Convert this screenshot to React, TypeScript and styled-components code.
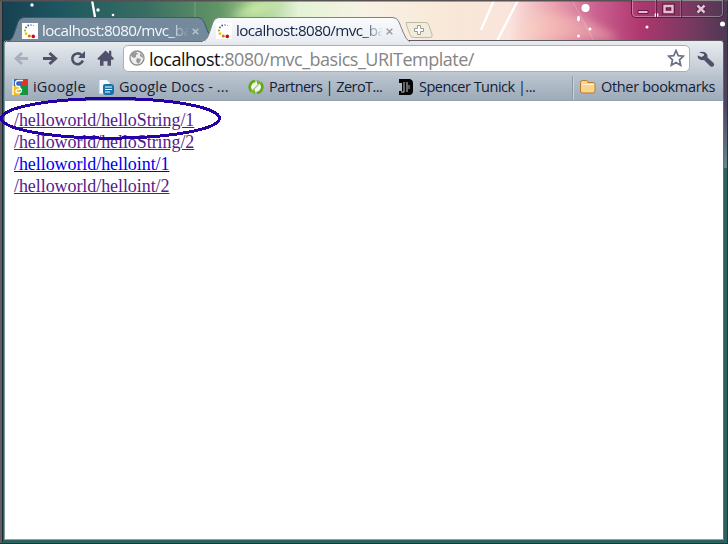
import React from "react";
import styled, { createGlobalStyle } from "styled-components";

const Global = createGlobalStyle`
  *{box-sizing:border-box}
  body{margin:0;background:#fff;overflow:hidden}
`;
const Window = styled.div`
  position:relative;width:728px;height:544px;padding:0 4px 4px 5px;
  display:flex;flex-direction:column;
  background:#2b625f;font-family:"Open Sans","Noto Sans",sans-serif;
`;
const Backdrop = styled.svg`position:absolute;left:0;top:0;`;
const TitleBar = styled.header`
  position:relative;height:41px;flex:none;display:flex;align-items:flex-end;
`;
const Tab = styled.div<{ $active?: boolean }>`
  position:relative;width:208px;height:24px;flex:none;display:flex;align-items:center;
  margin-left:${p => (p.$active ? "-13px" : "2px")};
  padding-left:${p => (p.$active ? "14px" : "15px")};
  z-index:${p => (p.$active ? 2 : 1)};
`;
const TabShape = styled.svg`position:absolute;left:0;top:0;`;
const TabIcon = styled.svg`position:relative;flex:none;margin-top:3px;`;
const TabTitle = styled.span<{ $active?: boolean }>`
  position:relative;width:160px;margin:1px -14px 0 4px;white-space:nowrap;
  font-size:15.2px;line-height:22px;letter-spacing:-.57px;
  color:${p => (p.$active ? "#142446" : "#f4f7fa")};
  mask-image:linear-gradient(90deg,#000 126px,transparent 147px);
`;
const Close = styled.svg`position:relative;flex:none;margin:5px 0 0 4px;`;
const NewTab = styled.svg`margin:0 0 2px -5px;flex:none;position:relative;z-index:1;`;
const Controls = styled.div`
  position:absolute;left:626px;top:0;width:93px;height:18px;display:flex;
  border:1px solid #67173f;border-top:0;border-radius:0 0 5px 5px;
  box-shadow:inset 0 0 0 1px #ffffff55;
`;
const Control = styled.button<{ $w: number }>`
  width:${p => p.$w}px;height:17px;padding:0 2px 2px 0;border:0;background:none;
  border-right:1px solid #681c48;box-shadow:inset -1px 0 #ffffff30;
  display:flex;align-items:center;justify-content:center;
  &:last-child{border-right:0;box-shadow:none;padding-right:4px}
`;
const Toolbar = styled.nav`
  position:relative;height:34px;flex:none;display:flex;align-items:center;
  background:linear-gradient(#e8ecf1,#bdc6d0);border-right:1px solid #59647a;border-radius:3px 3px 0 0;
`;
const NavIcons = styled.svg`flex:none;`;
const Address = styled.div`
  width:567px;height:27px;margin:0;padding-left:5px;display:flex;align-items:center;
  border:1px solid #a9afb9;border-radius:5px;background:#fff;flex:none;
`;
const Url = styled.span`
  flex:1;margin:1px 0 0 4px;font-size:18px;line-height:26px;letter-spacing:-.5px;color:#858585;white-space:nowrap;
  b{font-weight:400;color:#101010}
`;
const Bookmarks = styled.nav`
  position:relative;height:26px;flex:none;display:flex;align-items:center;
  background:linear-gradient(#b9c4cf,#9eabb8);border-bottom:1px solid #98a2ad;padding-left:7px;
  border-right:1px solid #59647a;
`;
const Bookmark = styled.span<{ $w: number }>`
  width:${p => p.$w}px;display:flex;align-items:center;gap:5px;flex:none;margin-top:-2px;
  svg{flex:none}
`;
const Label = styled.span<{ $ls: number }>`
  font-size:14.5px;line-height:20px;letter-spacing:${p => p.$ls}px;white-space:nowrap;color:#142038;
`;
const Divider = styled.i`width:2px;height:24px;border-left:1px solid #8d99a7;border-right:1px solid #c8d2dc;flex:none;`;
const Page = styled.main`
  position:relative;flex:1;background:#fff;padding:8px 9px;display:flex;flex-direction:column;align-items:flex-start;
  border-right:1px solid #59737e;border-bottom:1px solid #8ba6a8;
`;
const Link = styled.a<{ $fresh?: boolean }>`
  font:18px/22px "Liberation Serif",serif;letter-spacing:-.07px;color:${p => (p.$fresh ? "#0000ee" : "#551a8b")};
  text-decoration:underline;
`;
const Ring = styled.svg`position:absolute;left:0;top:92px;pointer-events:none;z-index:5;`;

const Dots = () => (
  <TabIcon width="16" height="16" viewBox="0 0 16 16">
    <path d="M0 0h16v16H0z" fill="#fff" />
    <circle cx="11.3" cy="13.4" r="1.8" fill="#c80d18" />
    <circle cx="7.3" cy="13" r="1.5" fill="#e66c10" />
    <circle cx="4" cy="10.7" r="1.4" fill="#f6c500" />
    <circle cx="3" cy="7.4" r="1" fill="#98a11c" />
    <circle cx="4" cy="4.4" r=".9" fill="#247649" />
    <circle cx="6.2" cy="2.5" r=".9" fill="#2a5da0" />
    <circle cx="9" cy="2" r=".7" fill="#504492" />
    <circle cx="11.5" cy="2.5" r=".5" fill="#a75291" />
  </TabIcon>
);
const BrowserTab = ({ active }: { active?: boolean }) => (
  <Tab $active={active}>
    <TabShape width="208" height="25">
      <defs>
        <linearGradient id="activeTab" x2="0" y2="1"><stop stopColor="#fafbfd" /><stop offset="1" stopColor="#e8ecf1" /></linearGradient>
      </defs>
      <path
        d="M0 25C5 23 6 20 8 14L11 5Q13 .5 17 .5H191Q195 .5 197 5L201 15Q204 23 208 25Z"
        fill={active ? "url(#activeTab)" : "#74899c"} stroke={active ? "#7b8285" : "#3e5968"} strokeWidth="1"
      />
      {active && <path d="M1 25H207" stroke="#e8ecf1" strokeWidth="2" />}
    </TabShape>
    <Dots />
    <TabTitle $active={active}>localhost:8080/mvc_ba</TabTitle>
    <Close width="7" height="7"><path d="M.7.7l5.6 5.6M6.3.7L.7 6.3" stroke={active ? "#9a9fa8" : "#b6c3cf"} strokeWidth="1.5" /></Close>
  </Tab>
);

export default function App() {
  return (
    <>
      <Global />
      <Window>
        <Backdrop width="728" height="544">
          <defs>
            <linearGradient id="sky">
              <stop stopColor="#173f50" /><stop offset=".08" stopColor="#1d5660" /><stop offset=".2" stopColor="#386e62" />
              <stop offset=".3" stopColor="#629466" /><stop offset=".35" stopColor="#9ac587" /><stop offset=".41" stopColor="#e3f3d6" />
              <stop offset=".5" stopColor="#f8f2e4" /><stop offset=".62" stopColor="#f8e8d8" /><stop offset=".7" stopColor="#fae4dc" />
              <stop offset=".76" stopColor="#eba3b0" /><stop offset=".82" stopColor="#cb6090" /><stop offset=".88" stopColor="#ae376f" />
              <stop offset=".95" stopColor="#783960" /><stop offset="1" stopColor="#4b3853" />
            </linearGradient>
            <linearGradient id="side" x2="0" y2="1"><stop stopColor="#4b3853" /><stop offset=".5" stopColor="#50435e" /><stop offset="1" stopColor="#66868c" /></linearGradient>
            <filter id="soft" x="-30%" y="-80%" width="160%" height="260%"><feGaussianBlur stdDeviation="5" /></filter>
            <filter id="glow"><feGaussianBlur stdDeviation=".7" /></filter>
          </defs>
          <path d="M0 0h728v42H0z" fill="url(#sky)" />
          <path d="M255 0h30l-25 18h-30z" fill="#c4e5a4" filter="url(#soft)" />
          <path d="M530 15q50-8 90 25h-105z" fill="#ffd5be" opacity=".4" filter="url(#soft)" />
          <path d="M92 0l3 17M494 0l-13 30M518 0l-21 41" stroke="#fff" strokeWidth="2.3" filter="url(#glow)" />
          <path d="M572 0l22 41M195 0v17" stroke="#fff" opacity=".2" />
          <g fill="#fff" filter="url(#glow)">
            <circle cx="585.5" cy="8" r="4" /><ellipse cx="578.5" cy="18.5" rx="1.5" ry="2.8" /><circle cx="590" cy="29" r="1.5" />
            <circle cx="578.5" cy="36" r="1.5" /><circle cx="647" cy="27" r="1.5" /><circle cx="656.5" cy="15" r="2" /><circle cx="722.5" cy="24" r="2.5" />
            <circle cx="32" cy="5" r="1.7" /><circle cx="98" cy="10" r="1.7" /><circle cx="113" cy="15" r="1.3" />
          </g>
          <path d="M723 41h5v127h-5z" fill="url(#side)" />
          <path d="M0 0h2v544H0z" fill="#665d64" /><path d="M2 2h1v540H2z" fill="#142e34" /><path d="M4 41h1v499H4z" fill="#799ba0" />
          <path d="M0 .5h728" stroke="#555052" strokeWidth="2" /><path d="M727.5 1v542" stroke="#27373d" />
          <path d="M0 543.5h728" stroke="#1b373b" />
          <path d="M5 40.5h718" stroke="#5f5b60" />
        </Backdrop>
        <TitleBar>
          <BrowserTab /><BrowserTab active />
          <NewTab width="29" height="18"><path d="M1 1.5h20q2 0 3 3l3 9q1 3-2 3H9q-3 0-4-3L1.5 4q-1-2.5 1-2.5z" fill="#f1eddc" stroke="#bdb9a5" /><path d="M12.5 4.5h3v3h3v3h-3v3h-3v-3h-3v-3h3z" fill="#fff" stroke="#9b9990" /></NewTab>
          <Controls>
            <Control $w={25} aria-label="Minimize"><svg width="13" height="16"><path d="M1 10.5h10v3H1z" fill="#e6bdd0" stroke="#671b41" /></svg></Control>
            <Control $w={25} aria-label="Maximize"><svg width="13" height="16"><path d="M2.5 6h8v6h-8z" fill="none" stroke="#671b41" strokeWidth="5" /><path d="M2.5 6h8v6h-8z" fill="none" stroke="#e6bdd0" strokeWidth="2.4" /></svg></Control>
            <Control $w={41} aria-label="Close"><svg width="14" height="16"><path d="M3.5 5.5l7 7M10.5 5.5l-7 7" stroke="#4b2844" strokeWidth="5" /><path d="M3.5 5.5l7 7M10.5 5.5l-7 7" stroke="#dfbfd1" strokeWidth="2.5" /></svg></Control>
          </Controls>
        </TitleBar>
        <Toolbar>
          <NavIcons width="118" height="34" viewBox="5 41 118 34">
            <path d="M28 58.5H17M22 53l-6 5.5 6 5.500" fill="none" stroke="#a9afbc" strokeWidth="2.8" />
            <path d="M43 58.5h12M49.5 53l6 5.5-6 5.5" fill="none" stroke="#4f5069" strokeWidth="3" />
            <path d="M81.5 55a5.4 5.4 0 1 0 1.3 5.5" fill="none" stroke="#4f5069" strokeWidth="2.6" /><path d="M85 51v7h-7z" fill="#4f5069" />
            <path d="M97.5 58.5l8-8 3.5 3.2v-3h2.3v5l2.7 2.8-1 1.2H111v6h-3.5v-4.5h-4v4.5H100v-6h-2z" fill="#4f5069" />
          </NavIcons>
          <Address>
            <svg width="16" height="16" viewBox="0 0 16 16"><circle cx="8" cy="8" r="7" fill="#eee" stroke="#929292" strokeWidth="1.4" /><path d="M3 3l4-1 2 2-2 1v2l-2 1-2-1-1-2zM8 8l4 1-1 3-2 2-2-3zM11 3l3 3v2l-3-2z" fill="#999" /></svg>
            <Url><b>localhost</b>:8080/mvc_basics_URITemplate/</Url>
            <svg width="18" height="18" viewBox="0 0 18 18"><path d="M9 1.5l2.2 5.1 5.3.5-4 3.7 1.2 5.4L9 13.4l-4.7 2.8 1.2-5.4-4-3.7 5.3-.5z" fill="#fff" stroke="#69728a" strokeWidth="1.7" /></svg>
            <svg width="4" height="4" />
          </Address>
          <NavIcons width="28" height="34" viewBox="690 41 28 34"><path d="M699 52.5q4-1.500 7 .5 2 1.500 1.500 4.500l6 5.500q1.500 2-.5 3.500-2 1-3.500-1l-5.500-5.500q-6 1-6.500-4.500l4 1.500 2.500-1.500v-1.500z" fill="#4f5069" /></NavIcons>
        </Toolbar>
        <Bookmarks>
          <Bookmark $w={86}>
            <svg width="16" height="16" viewBox="0 0 16 16"><path d="M0 0h9v7H0z" fill="#3366c4" /><path d="M9 0h7v7H9z" fill="#dc3426" /><path d="M8 7h8v9H8z" fill="#169342" /><path d="M0 7h8v9H0z" fill="#f1bd20" /><path d="M0 0h2v16H0z" fill="#fff" opacity=".7" /><path d="M11 1.500H6.500C2.500 1.500 2.500 7.500 6.500 7.500h1c0 2 2.500 2 2 4.500-1 3-6.500 2-5.500 0 0-2 3-2 5-2" fill="none" stroke="#fff" strokeWidth="1.3" /></svg>
            <Label $ls={0.2}>iGoogle</Label>
          </Bookmark>
          <Bookmark $w={150}>
            <svg width="16" height="16" viewBox="0 0 16 16"><path d="M1 .5h8l3 3V15H1z" fill="#f7fafc" stroke="#a8c2d6" /><path d="M7 5h6q3 0 3 3v5q0 3-3 3H8q-3 0-3-3V7q0-2 2-2z" fill="#1972a8" /><path d="M7 8h7M7 10.5h7M7 13h5" stroke="#fff" strokeWidth="1.2" /></svg>
            <Label $ls={0.08}>Google Docs - ...</Label>
          </Bookmark>
          <Bookmark $w={150}>
            <svg width="16" height="16" viewBox="0 0 16 16"><circle cx="8" cy="8" r="5" fill="#f2f9e9" /><path d="M7 2A6.2 6.2 0 0 0 3.5 12.5M9 14A6.2 6.2 0 0 0 12.5 3.5" fill="none" stroke="#64a817" strokeWidth="2.6" /><path d="M1 11.5l6-1v5zM15 4.5l-6 1v-5z" fill="#78b82b" /><path d="M5 11l6-6" stroke="#a9bc99" strokeWidth="1.2" /></svg>
            <Label $ls={-0.55}>Partners | ZeroT...</Label>
          </Bookmark>
          <Bookmark $w={174}>
            <svg width="16" height="16" viewBox="0 0 16 16"><path d="M1 0h11q3 1 3 4v8q0 3-3 4H1v-4h3V4H1z" fill="#050505" /><path d="M6 3v10H3M9 3v10" fill="none" stroke="#c5ccd4" /><path d="M10 7h2M10 9h2" stroke="#aaa" /></svg>
            <Label $ls={-0.5}>Spencer Tunick |...</Label>
          </Bookmark>
          <Divider />
          <Bookmark $w={143}>
            <svg width="22" height="16" viewBox="0 0 22 16"><path d="M6.5 13V3.5q0-2 2-2h4q1 0 1.5 2h5q2 0 2 2V12q0 2-2 2H8.500q-2 0-2-2z" fill="#fbd58d" stroke="#b67a31" /><path d="M8 5.5h12" stroke="#fff0c5" /></svg>
            <Label $ls={-0.33}>Other bookmarks</Label>
          </Bookmark>
        </Bookmarks>
        <Page>
          <Link>/helloworld/helloString/1</Link><Link>/helloworld/helloString/2</Link>
          <Link $fresh>/helloworld/helloint/1</Link><Link>/helloworld/helloint/2</Link>
        </Page>
        <Ring width="224" height="50" shapeRendering="crispEdges"><ellipse cx="110.5" cy="26.3" rx="109" ry="19.8" fill="none" stroke="#2500a5" strokeWidth="3" /></Ring>
      </Window>
    </>
  );
}
